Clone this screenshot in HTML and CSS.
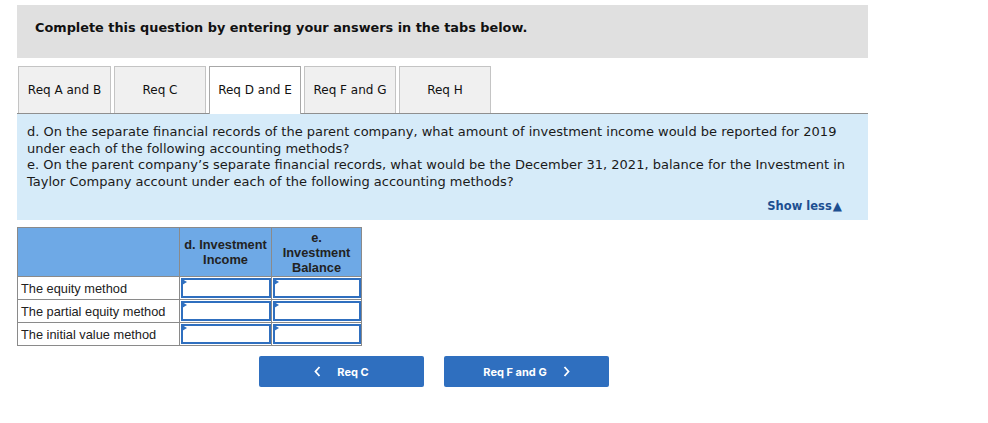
FILE: index.html
```html
<!DOCTYPE html>
<html>
<head>
<meta charset="utf-8">
<link rel="stylesheet" href="styles.css">
</head>
<body>
<div class="page">
  <div class="banner">Complete this question by entering your answers in the tabs below.</div>
  <div class="tabs">
    <div class="tab first">Req A and B</div>
    <div class="tab">Req C</div>
    <div class="tab active">Req D and E</div>
    <div class="tab">Req F and G</div>
    <div class="tab">Req H</div>
  </div>
  <div class="prompt">
    <p>d. On the separate financial records of the parent company, what amount of investment income would be reported for 2019 under each of the following accounting methods?<br>e. On the parent company’s separate financial records, what would be the December 31, 2021, balance for the Investment in Taylor Company account under each of the following accounting methods?</p>
    <div class="show-less">Show less<span class="tri">▲</span></div>
  </div>
  <table class="grid">
    <thead>
      <tr>
        <th class="c1"></th>
        <th class="c2">d. Investment Income</th>
        <th class="c3">e.<br>Investment Balance</th>
      </tr>
    </thead>
    <tbody>
      <tr><td class="label">The equity method</td><td class="in"><div class="box"></div></td><td class="in"><div class="box"></div></td></tr>
      <tr><td class="label">The partial equity method</td><td class="in"><div class="box"></div></td><td class="in"><div class="box"></div></td></tr>
      <tr><td class="label">The initial value method</td><td class="in"><div class="box"></div></td><td class="in"><div class="box"></div></td></tr>
    </tbody>
  </table>
  <div class="nav">
    <button class="btn"><svg class="chev" width="7" height="11" viewBox="0 0 7 11"><path d="M5.5 1 L1.5 5.5 L5.5 10" fill="none" stroke="#fff" stroke-width="1.8"/></svg>Req C</button>
    <button class="btn">Req F and G<svg class="chev right" width="7" height="11" viewBox="0 0 7 11"><path d="M1.5 1 L5.5 5.5 L1.5 10" fill="none" stroke="#fff" stroke-width="1.8"/></svg></button>
  </div>
</div>
</body>
</html>
```
FILE: styles.css
```css
* { box-sizing: border-box; }
html, body { margin: 0; padding: 0; background: #fff; }
body { font-family: "DejaVu Sans", Verdana, sans-serif; color: #000; }
.page { margin-left: 17px; width: 851px; padding-top: 5px; }
.banner {
  background: #e0e0e0;
  height: 53px;
  padding: 15px 0 0 18px;
  font-weight: bold;
  font-size: 12.85px;
  line-height: 16px;
  color: #111;
}
.tabs {
  display: flex;
  gap: 3px;
  margin-top: 8px;
  border-bottom: 1px solid #8f8f8f;
  padding-left: 1px;
}
.tab {
  width: 92px;
  height: 47px;
  background: #f0f0f0;
  border: 1px solid #c4c4c4;
  border-bottom: none;
  font-size: 12px;
  line-height: 47px;
  text-align: center;
  color: #111;
}
.tab.first { width: 93px; }
.tab.active { background: #fff; border-color: #a8a8a8; height: 48px; margin-bottom: -1px; }
.prompt {
  background: #d6ebf9;
  height: 106px;
  padding: 10px 10px 0 10px;
  position: relative;
}
.prompt p {
  margin: 0;
  font-size: 13px;
  line-height: 16.5px;
  color: #1a1a1a;
}
.show-less {
  position: absolute;
  right: 26px;
  top: 85px;
  font-size: 11.5px;
  font-weight: bold;
  color: #1d4f91;
}
.show-less .tri { font-size: 12px; margin-left: 1px; }
.grid {
  border-collapse: collapse;
  margin-top: 7px;
  font-family: "Liberation Sans", Arial, sans-serif;
}
.grid th {
  background: #6ea9e6;
  border: 1px solid #8a8a8a;
  height: 49px;
  font-size: 12.8px;
  font-weight: bold;
  line-height: 15px;
  color: #222;
  padding: 0 1px;
}
.grid th.c1 { width: 162px; }
.grid th.c2 { width: 92px; }
.grid th.c3 { width: 90px; }
.grid td {
  border: 1px solid #8a8a8a;
  height: 23px;
  padding: 0;
}
.grid td.label {
  font-size: 12.8px;
  color: #222;
  padding-left: 3px;
  padding-top: 1px;
  white-space: nowrap;
}
.grid td.in { padding: 1px 0 1px 1px; }
.box {
  height: 20px;
  border: 2px solid #2f6fbf;
  background: #fff;
  position: relative;
}
.box::before {
  content: "";
  position: absolute;
  left: -1px;
  top: -1px;
  border-top: 3px solid transparent;
  border-bottom: 3px solid transparent;
  border-left: 5px solid #2f6fbf;
}
.nav {
  display: flex;
  gap: 20px;
  margin-left: 242px;
  margin-top: 10px;
}
.btn {
  width: 165px;
  height: 31px;
  background: #2f6fbf;
  border: none;
  border-radius: 2px;
  color: #fff;
  font-family: Inter, "Liberation Sans", sans-serif;
  font-weight: bold;
  font-size: 11px;
  display: flex;
  align-items: center;
  justify-content: center;
  padding: 0;
}
.chev { margin-right: 16px; }
.chev.right { margin-right: 0; margin-left: 16px; }
```
